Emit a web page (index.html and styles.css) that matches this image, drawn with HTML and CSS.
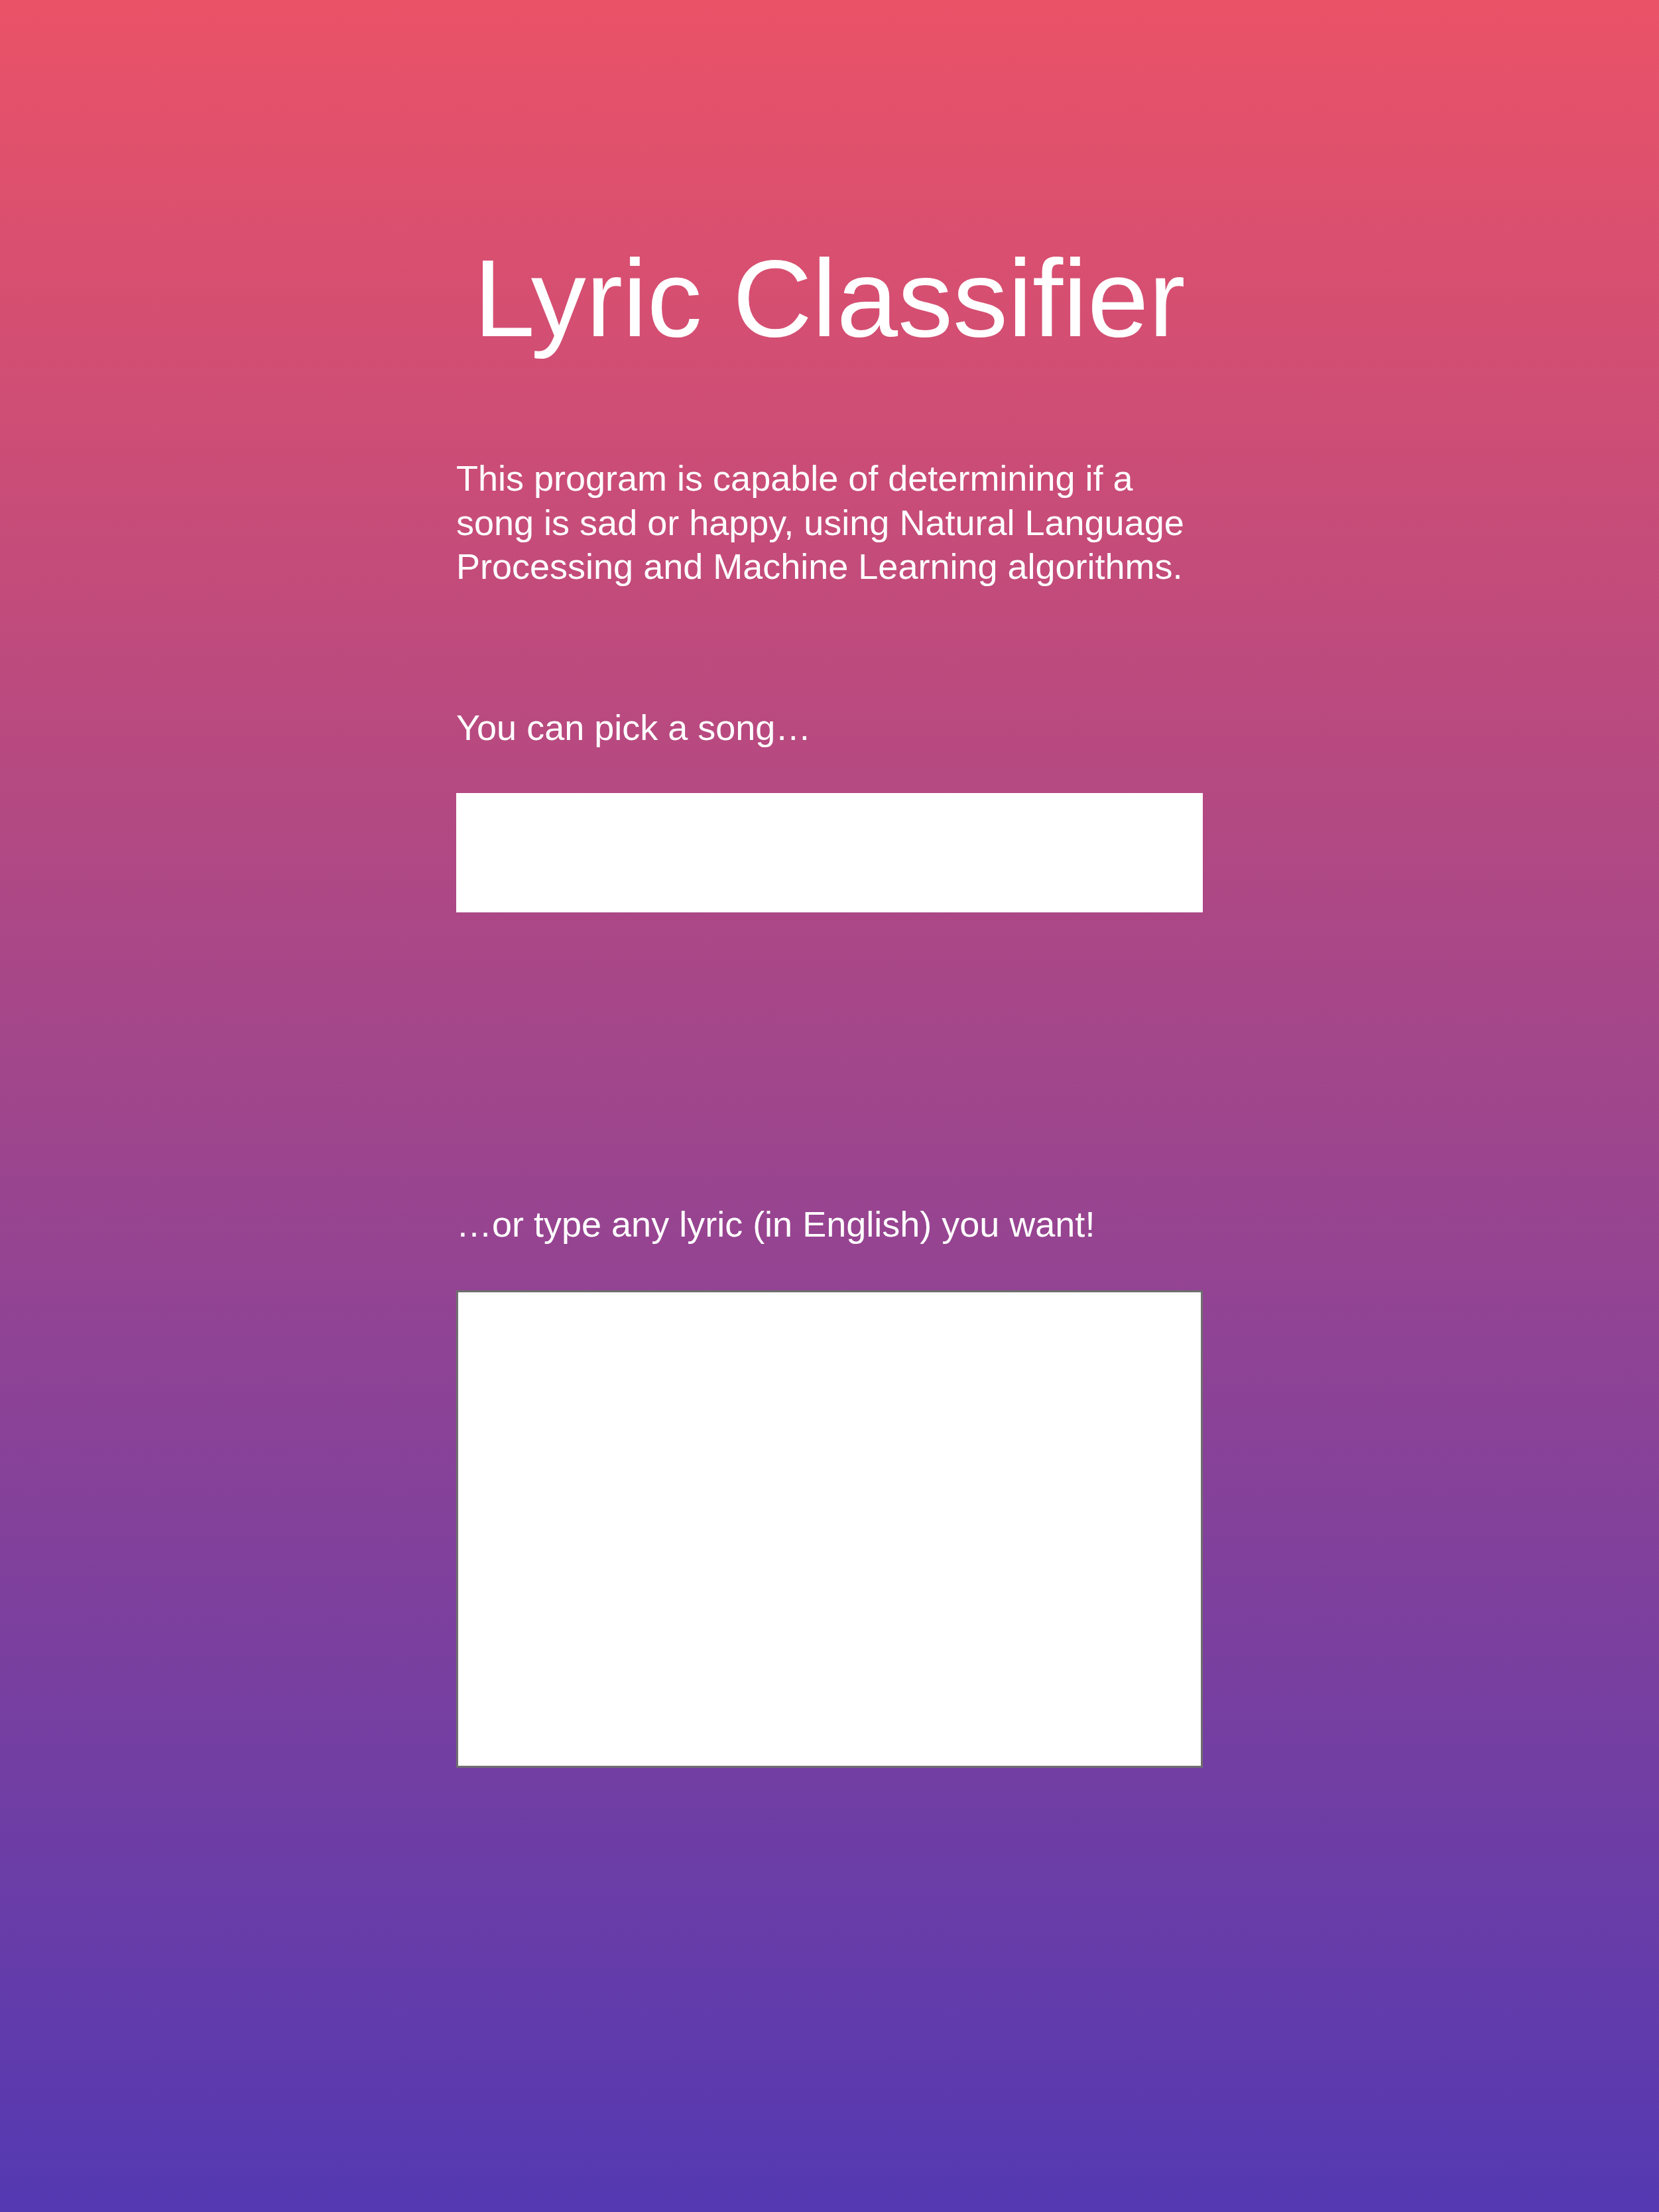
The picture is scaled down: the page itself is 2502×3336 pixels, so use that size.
FILE: index.html
```html
<!DOCTYPE html>
<html lang="en">
<head>
<meta charset="utf-8">
<title>Lyric Classifier</title>
<link rel="stylesheet" href="styles.css">
</head>
<body>
<main class="page">
  <h1 class="title">Lyric Classifier</h1>
  <p class="intro">This program is capable of determining if a song is sad or happy, using Natural Language Processing and Machine Learning algorithms.</p>
  <p class="label label-pick">You can pick a song…</p>
  <select class="song-select" aria-label="Pick a song"><option></option></select>
  <p class="label label-type">…or type any lyric (in English) you want!</p>
  <textarea class="lyric-input" aria-label="Lyric"></textarea>
</main>
</body>
</html>
```
FILE: styles.css
```css
html, body {
  margin: 0;
  padding: 0;
}

body {
  min-height: 3336px;
  background: linear-gradient(to bottom, #ea5267 0%, #5439b2 100%);
  font-family: "Liberation Sans", Arial, Helvetica, sans-serif;
  color: #ffffff;
}

.page {
  width: 1126px;
  margin: 0 auto;
  padding-top: 350px;
  display: flex;
  flex-direction: column;
}

.title {
  margin: 0;
  font-size: 166px;
  line-height: 200px;
  font-weight: normal;
  text-align: center;
  white-space: nowrap;
}

.intro {
  margin: 138px 0 0;
  font-size: 54px;
  line-height: 66.5px;
}

.label {
  margin: 0;
  font-size: 54px;
  line-height: 66.5px;
}

.label-pick {
  margin-top: 176px;
}

.song-select {
  margin-top: 66px;
  height: 180px;
  width: 100%;
  border: none;
  border-radius: 0;
  background: #ffffff;
  -webkit-appearance: none;
  appearance: none;
  font: inherit;
  outline: none;
}

.label-type {
  margin-top: 437px;
}

.lyric-input {
  margin-top: 66px;
  box-sizing: border-box;
  width: 100%;
  height: 720px;
  border: 3px solid #6f6f6f;
  border-radius: 0;
  background: #ffffff;
  resize: none;
  font: inherit;
  padding: 0;
}
```
